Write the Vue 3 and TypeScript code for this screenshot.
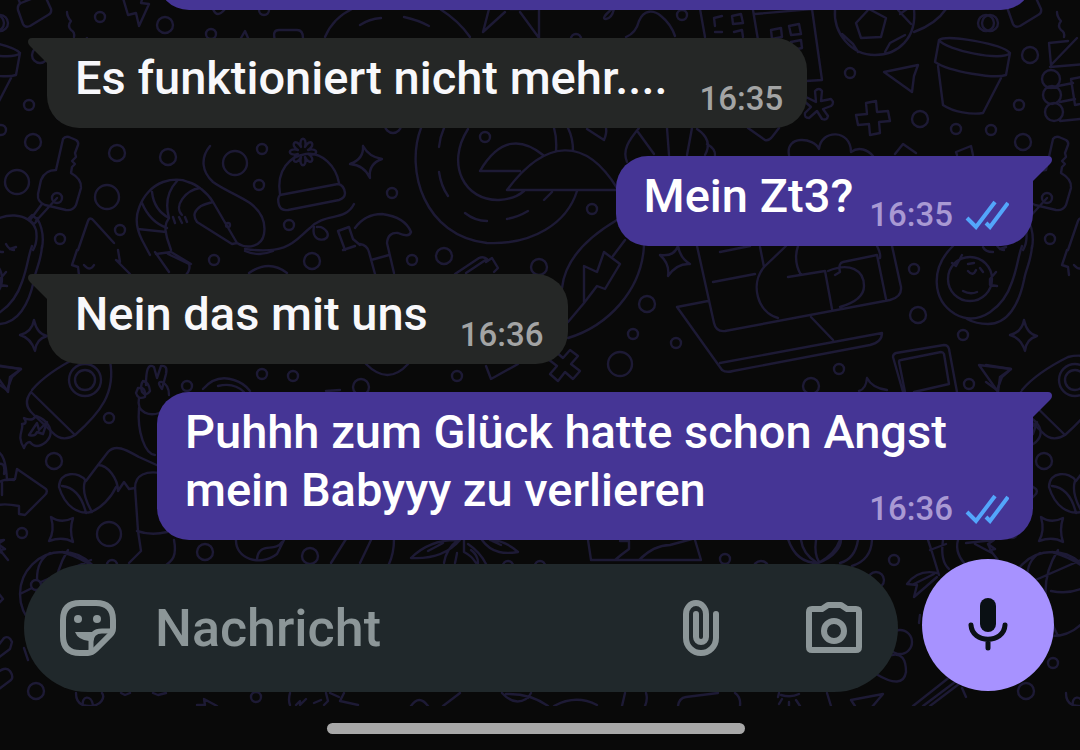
<script setup lang="ts">
import { ref } from 'vue'

interface Message {
  id: number
  own: boolean
  text: string
  time: string
}

interface Dot {
  x: number
  y: number
  r: number
}

const messages: Message[] = [
  { id: 1, own: false, text: 'Es funktioniert nicht mehr....', time: '16:35' },
  { id: 2, own: true, text: 'Mein Zt3?', time: '16:35' },
  { id: 3, own: false, text: 'Nein das mit uns', time: '16:36' },
  { id: 4, own: true, text: 'Puhhh zum Glück hatte schon Angst mein Babyyy zu verlieren', time: '16:36' },
]

const draft = ref('')

const at = (r: number, points: number[][]): Dot[] => points.map(([x, y]) => ({ x, y, r }))

const dots: Dot[] = [
  ...at(5, [
    [100, 17], [211, 34], [29, 105], [1, 130], [262, 149], [259, 185], [60, 239], [120, 230],
    [289, 225], [485, 137], [392, 193], [592, 209], [682, 15], [576, 39], [850, 73], [956, 129],
    [214, 260], [412, 260], [187, 386], [262, 374], [293, 376], [109, 418], [633, 334], [676, 343],
    [457, 376], [914, 269], [963, 335], [839, 369], [969, 384], [22, 533], [256, 697], [540, 566],
    [725, 559], [894, 560], [63, 663], [264, 10], [112, 565], [508, 566], [57, 198],
  ]),
  ...at(8, [
    [0, 23], [165, 25], [40, 55], [33, 142], [117, 153], [168, 157], [312, 261], [444, 256],
    [539, 267], [647, 304], [920, 119], [918, 315], [811, 386], [54, 461], [205, 552], [310, 556],
    [36, 691], [986, 23], [361, 387], [876, 580], [761, 569], [393, 125],
  ]),
  ...at(12, [[235, 163], [17, 182], [107, 197], [620, 364], [109, 534], [900, 642]]),
]

const doodles: string[] = [
  // brick, squiggle, bolt
  'M18 10q-1-5 3-7l20-8q4-1 5 3l5 11q1 4-3 6l-18 11q-5 2-7-2zM20 3l-2-5 8-4',
  'M67 12q0 5 4 9-4 5 0 9 4 2 3 7',
  'M123-2l5 17 8-2 3 13 10-22-8-1 2-7',
  // flower pot
  'M939 40C947 34 1002 44 1010 53C1002 62 946 50 939 40L935 62C950 72 995 79 1006 75L1010 53M938 66l5 39C953 112 972 115 983 113l18-35',
  // key
  'M56 170l7-31q2-3 6-2l7 3q3 2 2 5l-3 8 1 4-4 4 3 3-3 3-1 6q11 6 10 15l-5 17q-3 6-10 5l-21-5q-8-3-7-11l3-14q4-10 15-10M57 198l-21 23M42 204l-12 16M28 219l4-4 6 5-4 4z',
  // shrimp
  'M210 146C200 158 202 172 213 182C224 190 238 195 250 203C262 212 266 222 264 234C262 246 248 250 237 243'
    + 'M142 240C136 228 135 218 139 208C143 196 152 186 163 182C172 179 182 179 188 182C196 184 207 192 213 202L237 243L232 244L197 222C192 215 195 210 201 206C205 204 209 203 213 202'
    + 'M142 203Q150 222 167 228M152 192Q154 210 169 218M177 181Q163 196 169 218M200 188C186 190 173 206 182 215M138 229L166 232M169 218C163 226 166 232 167 238L171 250M142 240L150 255M173 217l2 6M179 217l3 6M185 217l2 5M226 225a2 2 0 1 0 4 0a2 2 0 1 0-4 0',
  'M245 249C290 255 295 240 310 228C325 212 345 222 354 204M314 227C310 244 332 242 327 232Q323 226 317 227',
  // bobble hat
  'M280 194C276 170 290 156 306 154C322 152 336 166 339 183M280 195L338 184Q344 185 345 193Q345 198 339 200L288 210Q281 211 279 205Q277 198 280 195',
  'M308 150C319 147 319 157 308 154C317 159 310 167 305 157C308 168 298 168 301 157C296 167 289 159 298 154C287 157 287 147 298 150C289 145 296 137 301 147C298 136 308 136 305 147C310 137 317 145 308 150',
  // dial
  'M352 9Q333 18 325 37M360 25q9-6 21-7M404 17q14 3 25 9M440 9q19 12 30 28',
  // clouds in a circle
  'M421 128c-16 42 3 108 66 115 46 2 80-20 90-52M444 128q-4 9-5 19M439 172q2 14 9 24M465 213q10 8 22 8M507 219q11-2 21-8M544 200l8-8M468 129C445 165 465 201 499 200Q515 199 524 191M480 171h40M480 171C500 137 522 138 543 155M507 190C545 139 585 136 617 188M507 190H617M554 128q3 10 2 23M568 128q5 10 5 23',
  'M275 40q-3-10 4-10h18q6 0 6 8M241 38l4-7 3 7M213 9q4 10 12 0',
  // star with rays
  'M489 9l-6 23 22-20M520 12l19 26v-28M510 9h25',
  'M612 9q-12 10-6 10 6-1 8-10M626 37q10-4 13-16c5-12 15-11 22-5q10 8 14 20',
  // buildings
  'M700 9l5 28M714 18l8-2M714 18l1 8M715 32h7',
  'M753 10l5 30M755 14l57-5 10 71-16 1',
  'M732 16l9-2 2 9-10 1zM734 32l8-2 1 7M771 30l10-2 1 9-10 2zM789 26l10-2 2 10-10 1zM791 42l10-2 1 8-9 2z',
  // ball
  'M835 9c-2 24 16 46 40 46 23 0 42-17 39-46M856 23l13-14 17 9-5 19-20 1zM842 34l11 10 5 8M885 52l5-9 15-8M900 14l7-5M911 24l-13-14M914 32q22-8 32-23',
  // paper plane, plus, asterisk
  'M884 72l34-7-4 11-2 16z',
  'M876 101L877 112 888 111 890 121 879 122 880 133 870 135 869 124 858 125 856 115 867 114 866 103z',
  'M816 102L815 91Q819 87 822 91L821 101 831 99Q835 103 831 106L823 109 828 116Q827 121 822 119L817 111 809 118Q804 118 805 113L811 107 804 101 806 97z',
  'M748 128l17 12q4 1 7-3l7-9M789 155c-4-20 25-18 30-6 2-20 32-20 32 3 8-6 17-2 22 4M895 154l8-10 13 9M957 155l-1-3 15-6 2 9',
  // shell
  'M627 162c-5-12 2-22 12-34M638 132l16 22M667 128l2 27M692 128l-5 27M697 129c12 8 13 17 8 26M707 144q9 5 8 12M587 129l17 11q3-7 2-12',
  // house with logs
  'M1068 41l-19 2 2 22 26-27M1050 67l35-3M1042 79a9 9 0 1 0 18 0a9 9 0 1 0-18 0M1043 95a9 9 0 1 0 18 0a9 9 0 1 0-18 0M1045 112a9 9 0 1 0 18 0a9 9 0 1 0-18 0M1058 86l15-3M1060 102l15-3M1060 121l30-3M1071 79l20-4M1071 79l4 26 20-4',
  // sparkles
  'M363 146q6 11 19 13-14 5-12 19-6-13-20-14 14-5 13-18',
  'M34 320q3 14 13 16-11 3-12 15-4-13-15-16 12-3 14-15',
  'M660 255q14 2 18-9 2 12 12 18-13-1-22 12 2-12-8-21',
  'M867 378q5 10 20 12M867 378q-1 11-8 13',
  'M51 517q10 7 22 1-4 12 0 24-10-6-24-1 6-10 2-24',
  // hammer
  'M355 228Q365 214 382 214Q405 217 411 232Q409 238 398 233Q388 232 387 243L394 273M371 260l18-5M360 244q7 1 9 8l6 22M338 231l11-4 4 12 7 6M338 231l7 19',
  // tree and tools
  'M78 250l10-29q2-5 6 0l20 22M77 250l-5 15 6 2 1 8M118 250l2 12-4-2 14 14M84 265q6 7 10 0',
  'M155 252l14 20M168 254l21 10q2 6-4 12M156 254l15-2 20 12M245 251q14 6 28 0M249 273q20-14 38 0M343 250l12-4',
  // balloon with bolt
  'M617 220Q566 250 562 288M644 245C642 290 608 326 568 338M568 322l16-19M604 252l16 12-15 25-8-3-13 17v-37l13 6zM613 256l12-16',
  'M455 274l24-16q4-2 8 1l-21 14M486 262l6-4 6 10-4 4',
  'M578 356L571 364 580 371 573 379 565 372 558 381 550 374 557 366 548 359 555 351 563 358 570 350z',
  'M486 366l5 13 27-15M366 364q22 22 42 0',
  // laptop
  'M697 246l17 77q2 9 11 8l165-31q12-3 11-13l-9-41M677 307l31-6M677 307l45 63q4 3 11 1l137-26q12-3 12-12L720 363M811 317l22 23M720 252l30-6M713 282l42-8M760 247l4 20M786 246L764 267C750 284 757 312 778 318M788 277l37-6 7 38M798 246q-5 15 3 29M828 271C850 262 864 270 864 286Q864 300 840 307M835 275l5-3q-2-9 3-10l34-7 9 44M877 246q4 8 3 12',
  // face in a hood
  'M953 246C930 268 932 300 955 314C980 328 1004 306 1012 282C1018 266 1018 256 1022 246M1032 246C1031 262 1026 268 1024 280C1019 304 1008 324 988 324Q976 324 967 319M948 279a22 22 0 1 0 44 0a22 22 0 1 0-44 0M952 263l4 3 6-11M996 272l-6 7v6l7 1M968 264l6-1M968 271q5 6 8-1M980 268l3 4M963 291q7 4 14 1M983 247q2 5 10 5M1000 249l6-2',
  'M980 225C990 212 1020 211 1026 230Q1028 242 1023 250M1027 218q8 14 5 30M996 244q3 6 8 6',
  // picture frame
  'M903 392l-10-35q0-3 3-4l48-8q4 0 5 4l8 43M905 392l-6-30q0-2 2-2l40-8q2 0 3 2l5 30-35 8',
  'M979 365l32 4-11 8-2 15z',
  // rocket
  'M32 390C42 378 60 366 78 357Q94 353 110 361C116 393 100 413 75 435Q62 443 52 432L33 414Q22 404 31 392L75 435M75 380a10 10 0 1 0 20 0a10 10 0 1 0-20 0M69 380a16 16 0 1 0 32 0a16 16 0 1 0-32 0',
  'M24 448C16 436 24 430 22 424Q28 424 24 418Q32 422 36 416C48 420 56 432 46 442Q36 450 30 442Q26 442 24 448M29 435l8-12 2 7 8-8-4 12-6-2q-2 5-8 3M-4 365l25 4-9 8-5 13-11-8',
  // victory hand
  'M139 398c-3 16 12 18 20 15M146 385c0-15 2-22 8-18l3 11 4-12q7-1 5 8l-4 15q-6-8 0-7 7 3 7 13M143 381q6 1 7 10-4 6-8 1-2-7 1-11M138 388q8-2 7 9-7 3-9-4zM139 408c-2 24 6 46 16 47',
  // hearts and leaves
  'M98 465l10-13c8-9 20-1 31 5l22 10M98 465c10 0 20 14 20 26l6-9 5 7 6-1c0-14 12-17 25-15M98 465l-12 16c-7-10-27-10-27 6 6 20 20 28 32 25 10-4 20-14 25-25M62 486q18 2 24 27M85 481q-4 12 7 31',
  'M203 389Q216 374 234 380Q244 383 250 391M218 386q16-4 26 6M326 391l14-1',
  'M-6 450c10 2 12 14 13 30l8-1 2-10 29 20q2 3-1 6l-20 20-6-1 0-8q-20-4-28 2M-4 465q10-5 8 9M-9 490q9-13 23-10',
  'M135 487l3 44 3 20-12 12M137 531q14 5 30 1M174 540c3 16-1 21-11 27M2 495v-12',
  'M236 539c-1 20 24 28 41 15l7-14M257 559c2-18 18-6 25-17M331 563l15-24',
  // blossom
  'M371 540l-11 23M394 539q0 14-5 25M411 558c12-12 28-18 45-18M411 558c18 1 36-3 49-18M428 551l15-8M444 563q2-14 14-23M455 563q2-9 2-10M464 540v12Q472 556 476 563M471 550q7 5 7 13M468 544q12 8 18 20M482 540C492 554 506 554 518 552C508 543 500 540 490 540M490 540l11 5',
  'M588 540l3 20h110l-6-20M620 541h9v8l-8 6-6 5M639 560q15-15 31-15l22-6',
  'M788 539q8 24 30 24c18-6 23-18 23-23M801 540q2 14 15 22M816 540q-2 14 3 22M840 540q-5 14-20 22M872 540q-1 20-20 26M858 540q-3 19-18 23',
  // carrot
  'M928 540l4 12 7 23M943 540q-3 21 6 29M930 550l16-6M958 540q-4 14 10 27M966 543l28-3-6 4 4 9-17-9M937 573q-19-4-30 11l10 1-3 12 23-20M914 584l20-10',
  // globe
  'M20 594a42 42 0 1 0 84 0a42 42 0 1 0-84 0M31 585a5 5 0 1 0 10 0a5 5 0 1 0-10 0M37 579q0-19 13-26M20 594l12-6M41 582l50-22M36 590l20 45M62 552q46 14 42 40M8 560l-8-10 5-1-7-5M-4 590l7 9-6 6M61 591q25 5 43-10M68 550q-25 40 0 86',
  'M-5 650l9-12q5-3 8 4l-2 7-16 12M-5 675q10-10 15-4 4 6 1 9l-12 9M24 648l4 12M76 693q0 13 13 13c13 0 16-9 13-13M83 706c-2-10 8-12 10-1',
  'M121 693l4 2 5-2M153 693l5 2 8-2M197 705l8 0-1-6 13 7M290 693q-2 7 0 12M296 705l4-4v4l6-6M314 703l7-3M326 693l2 8-4 4M330 693l9 4M340 701l4-8M340 701l18 4',
  'M411 706q8-12 17 0M443 706l17-13M502 693q12 13 24 6M506 694q24-1 42 12M554 706q22-12 43-1M528 698l3-5M625 693l-3 13M646 693q2 6-1 13M678 706q1-8 8-9l32-4',
  'M735 693q6 4 5 13M779 693l-1 4M781 695q10 3 18-1M789 702v5M796 700l4 6M782 699l-3 5M827 693l4 13M851 700l32-6-11 13M851 700l4 6M913 706l38-30M923 706l36-27M930 706l50-38M962 688l4 9M876 657l16-2Q906 652 906 672Q903 690 876 674M920 615l-1 8',
]
</script>

<template>
  <div class="screen">
    <div class="chat">
      <svg class="wallpaper" viewBox="0 0 1080 706" preserveAspectRatio="xMinYMin slice" aria-hidden="true">
        <defs>
          <g id="wallpaper-tile">
            <path v-for="(d, i) in doodles" :key="i" :d="d" />
            <circle v-for="(dot, i) in dots" :key="'c' + i" :cx="dot.x" :cy="dot.y" :r="dot.r" />
          </g>
        </defs>
        <use href="#wallpaper-tile" />
        <use href="#wallpaper-tile" x="990" />
        <use href="#wallpaper-tile" x="-990" />
      </svg>

      <main class="messages">
        <div class="bubble own earlier" aria-hidden="true"></div>
        <article v-for="m in messages" :key="m.id" class="bubble" :class="m.own ? 'own' : 'other'">
          <svg class="tail" viewBox="0 0 24 30" aria-hidden="true">
            <path d="M0 0H19Q23 0 23 4Q23 6 21 8L4 25V30H0Z" />
          </svg>
          <p class="text">{{ m.text }}</p>
          <span class="meta">
            <time>{{ m.time }}</time>
            <svg v-if="m.own" class="ticks" viewBox="0 0 44 30" role="img" aria-label="Gelesen">
              <path d="M2 18L11 27L30 2M21 23L25 27L43 3" />
            </svg>
          </span>
        </article>
      </main>

      <form class="composer" @submit.prevent>
        <div class="field">
          <button type="button" class="icon" aria-label="Sticker">
            <svg viewBox="0 0 56 56" class="line">
              <path d="M20 3H36Q53 3 53 20V28Q53 32 50 35L36 49Q32 53 28 53H20Q3 53 3 36V20Q3 3 20 3Z" />
              <path class="fold" d="M52 31H42Q31 31 31 42V52" />
              <circle class="solid" cx="18" cy="19" r="4" />
              <circle class="solid" cx="37" cy="19" r="4" />
              <path class="solid" d="M15 32H36Q30 36 29 41Q18 40 15 32Z" />
            </svg>
          </button>
          <input v-model="draft" type="text" placeholder="Nachricht" aria-label="Nachricht" />
          <button type="button" class="icon clip" aria-label="Anhang">
            <svg viewBox="0 0 36 56" class="line">
              <path d="M33 14V38A15 15 0 0 1 3 38V14A10 11 0 0 1 23 14V37A5 5 0 0 1 13 37V14" />
            </svg>
          </button>
          <button type="button" class="icon" aria-label="Kamera">
            <svg viewBox="0 0 56 56" class="line">
              <path d="M6 9H16L22 5H35L41 9H50Q53 9 53 12V47Q53 50 50 50H6Q3 50 3 47V12Q3 9 6 9Z" />
              <circle cx="28" cy="31" r="10" />
            </svg>
          </button>
        </div>
        <button type="button" class="mic" aria-label="Sprachnachricht aufnehmen">
          <svg viewBox="0 0 40 54">
            <rect x="12" y="0" width="16" height="34" rx="8" fill="#0a1014" />
            <path d="M3 27C4 46 36 46 37 27M20 42V50" fill="none" stroke="#0a1014" stroke-width="5" stroke-linecap="round" />
          </svg>
        </button>
      </form>
    </div>
    <div class="gesture"><span class="handle"></span></div>
  </div>
</template>

<style>
body {
  margin: 0;
  background: #090909;
}
</style>

<style scoped>
.screen {
  display: flex;
  flex-direction: column;
  height: 100vh;
  overflow: hidden;
  background: #090909;
  color: #f8f8fb;
  font-family: Roboto, "Liberation Sans", sans-serif;
  font-weight: 500;
}

.chat {
  position: relative;
  flex: 1;
  min-height: 0;
  display: flex;
  flex-direction: column;
  overflow: hidden;
}

.wallpaper {
  position: absolute;
  inset: 0;
  width: 100%;
  height: 100%;
  fill: none;
  stroke: #1d1a35;
  stroke-width: 2.4;
  stroke-linecap: round;
  stroke-linejoin: round;
}

.messages {
  position: relative;
  flex: 1;
  min-height: 0;
  display: flex;
  flex-direction: column;
  justify-content: flex-end;
  align-items: flex-start;
  gap: 28px;
  padding: 0 47px 18px;
}

.bubble {
  position: relative;
  flex: none;
  display: flow-root;
  box-sizing: border-box;
  max-width: calc(100% - 110px);
  padding: 11px 24px 9px 28px;
  border-radius: 32px;
  background: #252726;
  color: #f8f8fb;
  font-size: 47px;
  line-height: 58px;
}

.other {
  border-top-left-radius: 0;
}

.own {
  align-self: flex-end;
  border-top-right-radius: 0;
  background: #453595;
  color: #ffffff;
}

.earlier {
  width: 100%;
  min-height: 90px;
}

.tail {
  position: absolute;
  top: 0;
  width: 24px;
  height: 30px;
}

.own .tail {
  left: calc(100% - 4px);
  fill: #453595;
}

.other .tail {
  right: calc(100% - 4px);
  transform: scaleX(-1);
  fill: #252726;
}

.text {
  display: inline;
  margin: 0;
}

.meta {
  float: right;
  display: flex;
  align-items: center;
  gap: 12px;
  margin-top: 30px;
  margin-left: 32px;
  color: #a3a4a4;
  font-size: 33px;
  line-height: 40px;
}

.own .meta {
  margin-top: 28px;
  margin-bottom: 2px;
  margin-left: 16px;
  color: #a999d3;
}

.ticks {
  width: 44px;
  height: 30px;
  fill: none;
  stroke: #53a6fb;
  stroke-width: 4;
}

.composer {
  position: relative;
  display: flex;
  align-items: center;
  gap: 24px;
  padding: 0 26px 14px 24px;
}

.field {
  flex: 1;
  min-width: 0;
  display: flex;
  align-items: center;
  box-sizing: border-box;
  height: 128px;
  margin-top: 6px;
  padding: 0 36px;
  border-radius: 64px;
  background: #20282b;
}

button {
  display: flex;
  align-items: center;
  justify-content: center;
  padding: 0;
  border: 0;
  background: none;
}

.icon {
  flex: none;
  width: 56px;
  height: 56px;
}

.icon svg {
  height: 56px;
}

.clip {
  margin-right: 87px;
  width: 36px;
}

.line {
  fill: none;
  stroke: #8c9698;
  stroke-width: 6;
  stroke-linejoin: round;
  stroke-linecap: round;
}

.fold {
  stroke-width: 5;
}

.solid {
  fill: #8c9698;
  stroke: none;
}

input {
  flex: 1;
  min-width: 0;
  height: 80px;
  margin: 0 0 0 35px;
  padding: 0 4px;
  border: 0;
  outline: 0;
  background: none;
  color: #f8f8fb;
  font: inherit;
  font-size: 52px;
}

input::placeholder {
  color: #8c9698;
  opacity: 1;
}

.mic {
  flex: none;
  width: 132px;
  height: 132px;
  border-radius: 50%;
  background: #a792ff;
}

.mic svg {
  width: 40px;
  height: 54px;
}

.gesture {
  flex: none;
  display: flex;
  justify-content: center;
  box-sizing: border-box;
  height: 44px;
  padding: 17px 8px 0 0;
}

.handle {
  width: 39%;
  height: 11px;
  border-radius: 6px;
  background: #a8a8a8;
}
</style>
